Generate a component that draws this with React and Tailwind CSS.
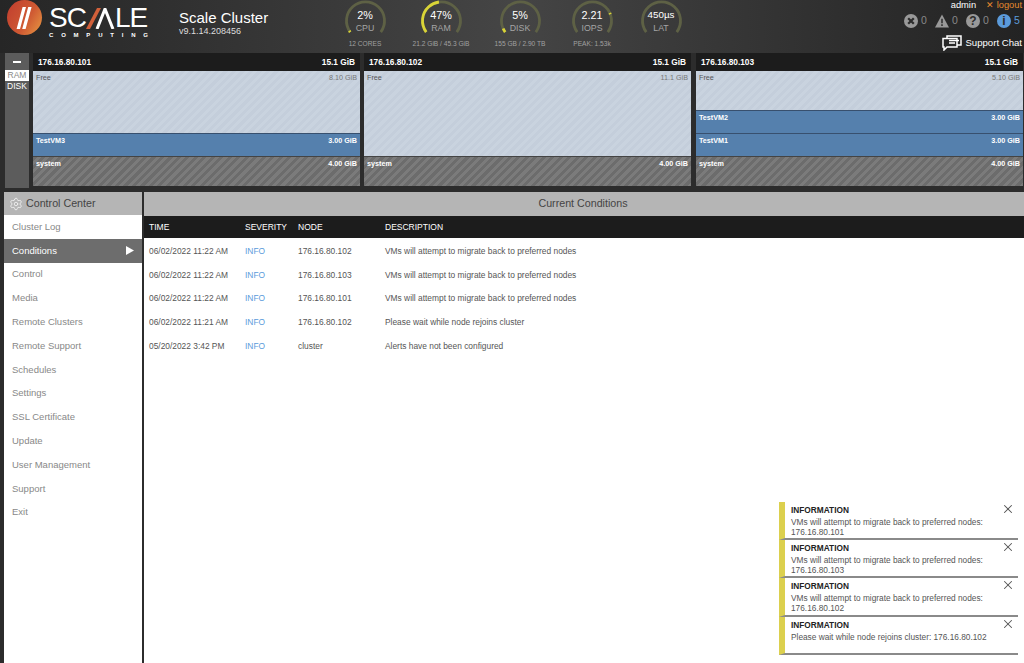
import React from "react";
import { X, Settings } from "lucide-react";

const GAUGES = [
  { value: "2%", label: "CPU", sub: "12 CORES", width: "w-[76px]", dash: "2 100" },
  { value: "47%", label: "RAM", sub: "21.2 GiB / 45.3 GiB", width: "w-[76px]", dash: "47 100" },
  { value: "5%", label: "DISK", sub: "155 GB / 2.90 TB", width: "w-[82px]", dash: "5 100" },
  { value: "2.21", label: "IOPS", sub: "PEAK: 1.53k", width: "w-[62px]", dash: "0 76 1.5 100" },
  { value: "450µs", label: "LAT", sub: "", width: "w-[76px]", dash: "0 100", tight: true },
];

const NODES = [
  {
    ip: "176.16.80.101",
    offset: "",
    rows: [
      { name: "Free", size: "8.10 GiB", kind: "free", h: "h-[62px]" },
      { name: "TestVM3", size: "3.00 GiB", kind: "vm", h: "h-[23px]" },
      { name: "system", size: "4.00 GiB", kind: "sys", h: "h-[30px]" },
    ],
  },
  {
    ip: "176.16.80.102",
    offset: "",
    rows: [
      { name: "Free", size: "11.1 GiB", kind: "free", h: "h-[85px]" },
      { name: "system", size: "4.00 GiB", kind: "sys", h: "h-[30px]" },
    ],
  },
  {
    ip: "176.16.80.103",
    offset: "ml-[1px]",
    rows: [
      { name: "Free", size: "5.10 GiB", kind: "free", h: "h-[39px]" },
      { name: "TestVM2", size: "3.00 GiB", kind: "vm", h: "h-[23px]" },
      { name: "TestVM1", size: "3.00 GiB", kind: "vm", h: "h-[23px]" },
      { name: "system", size: "4.00 GiB", kind: "sys", h: "h-[30px]" },
    ],
  },
];

const ROW_STYLE = {
  free: "bg-[repeating-linear-gradient(135deg,#c9d3df_0px,#c9d3df_3px,#c4cedb_3px,#c4cedb_6px)] text-[#555]",
  vm: "bg-[#5580ad] border-t border-[#38506e] text-white font-bold",
  sys: "bg-[repeating-linear-gradient(135deg,#6c6c6c_0px,#6c6c6c_3px,#7b7b7b_3px,#7b7b7b_6px)] border-t border-[#444] text-white font-bold",
};

const MENU = [
  "Cluster Log", "Conditions", "Control", "Media", "Remote Clusters", "Remote Support",
  "Schedules", "Settings", "SSL Certificate", "Update", "User Management", "Support", "Exit",
];

const CONDITIONS = [
  ["06/02/2022 11:22 AM", "176.16.80.102", "VMs will attempt to migrate back to preferred nodes"],
  ["06/02/2022 11:22 AM", "176.16.80.103", "VMs will attempt to migrate back to preferred nodes"],
  ["06/02/2022 11:22 AM", "176.16.80.101", "VMs will attempt to migrate back to preferred nodes"],
  ["06/02/2022 11:21 AM", "176.16.80.102", "Please wait while node rejoins cluster"],
  ["05/20/2022 3:42 PM", "cluster", "Alerts have not been configured"],
];

const TOASTS = [
  ["VMs will attempt to migrate back to preferred nodes:", "176.16.80.101"],
  ["VMs will attempt to migrate back to preferred nodes:", "176.16.80.103"],
  ["VMs will attempt to migrate back to preferred nodes:", "176.16.80.102"],
  ["Please wait while node rejoins cluster: 176.16.80.102"],
];

const ARC = "M 6.2 32.1 A 19 19 0 1 1 36.8 32.1";

function Gauge({ value, label, sub, width, dash, tight }) {
  return (
    <div className={`${width} shrink-0 flex flex-col items-center`}>
      <div className="relative w-[43px] h-[36px]">
        <svg width="43" height="36" viewBox="0 0 43 36" className="block">
          <path d={ARC} fill="none" stroke="#5e6145" strokeWidth="2.8" />
          <path d={ARC} fill="none" stroke="#d9d437" strokeWidth="2.8" pathLength="100" strokeDasharray={dash} />
        </svg>
        <div className={`absolute inset-x-[-6px] top-[8px] text-center leading-[14px] text-white ${tight ? "text-[9.8px]" : "text-[10.8px]"}`}>{value}</div>
        <div className="absolute inset-x-[-6px] top-[22px] text-center text-[8.8px] leading-[12px] text-[#a5a5a5]">{label}</div>
      </div>
      <div className="mt-[3px] text-[6.6px] leading-[10px] whitespace-nowrap text-[#a0a0a0]">{sub}</div>
    </div>
  );
}

function Logo() {
  return (
    <div className="flex shrink-0 w-[179px] pl-[7px]">
      <svg width="36" height="35" viewBox="0 0 36 35" className="shrink-0">
        <defs>
          <linearGradient id="logoFill" x1="0" y1="0.2" x2="1" y2="0.8">
            <stop offset="0" stopColor="#c2402f" />
            <stop offset="0.6" stopColor="#cf5a33" />
            <stop offset="1" stopColor="#e48f40" />
          </linearGradient>
        </defs>
        <circle cx="17.5" cy="17.5" r="17.5" fill="url(#logoFill)" />
        <path d="M15.6 7 L19 7 L13 29 L9.6 29 Z M21.2 7 L24.6 7 L18.6 29 L15.2 29 Z" fill="#fff" />
      </svg>
      <div className="ml-[6px] w-[99px]">
        <div className="flex items-center h-[22px] mt-[7px] text-[28px] leading-[22px] text-white">
          <span className="tracking-[-1px]">SC</span>
          <svg width="29" height="21" viewBox="0 0 29 21" className="shrink-0">
            <path d="M0 21 L11 0 L15 0 L4 21 Z" fill="#d2603a" />
            <path d="M11 21 L19 1 L27 21" fill="none" stroke="#fff" strokeWidth="3" />
          </svg>
          <span className="tracking-[-1px]">LE</span>
        </div>
        <div className="mt-[2px] flex justify-between text-[6px] leading-[8px] font-bold text-white">
          {"COMPUTING".split("").map((c, i) => (
            <span key={i}>{c}</span>
          ))}
        </div>
      </div>
    </div>
  );
}

function StatusIcon({ type }) {
  if (type === "error") {
    return (
      <svg width="14" height="14" viewBox="0 0 15 15">
        <circle cx="7.5" cy="7.5" r="7.5" fill="#999" />
        <path d="M4.5 4.5 L10.5 10.5 M10.5 4.5 L4.5 10.5" stroke="#2c2c2c" strokeWidth="2.4" />
      </svg>
    );
  }
  if (type === "warn") {
    return (
      <svg width="14" height="14" viewBox="0 0 15 14">
        <path d="M7.5 0 L15 14 L0 14 Z" fill="#999" />
        <path d="M7.5 4.5 V9.5 M7.5 10.6 V12.4" stroke="#2c2c2c" strokeWidth="1.6" />
      </svg>
    );
  }
  const info = type === "info";
  return (
    <div className={`w-[14px] h-[14px] rounded-full flex items-center justify-center text-[#2c2c2c] font-bold text-[12px] leading-none ${info ? "bg-[#5b9bdb]" : "bg-[#999]"}`}>
      {info ? "i" : "?"}
    </div>
  );
}

function HeaderRight() {
  const stats = [
    { type: "error", n: "0", w: "w-[31px]" },
    { type: "warn", n: "0", w: "w-[31px]" },
    { type: "help", n: "0", w: "w-[31px]" },
    { type: "info", n: "5", w: "w-[24px]" },
  ];
  return (
    <div className="ml-auto w-[125px] shrink-0 flex flex-col items-end pr-[2px] text-[9.3px]">
      <div className="flex gap-[10px] leading-[10px] text-white">
        <span>admin</span>
        <span className="text-[#e58a2e]">✕ logout</span>
      </div>
      <div className="flex items-center mt-[3px] mr-[1px]">
        {stats.map((s) => (
          <div key={s.type} className={`${s.w} flex items-center gap-[3px]`}>
            <StatusIcon type={s.type} />
            <span className={`text-[10.5px] ${s.type === "info" ? "text-[#5b9bdb]" : "text-[#888]"}`}>{s.n}</span>
          </div>
        ))}
      </div>
      <div className="flex items-center mt-[6px] text-white text-[9.6px] leading-[14px]">
        <svg width="20" height="16" viewBox="0 0 20 16" fill="none" stroke="#fff" strokeWidth="1.5" className="mr-[3px]">
          <path d="M5 3 V1 H19 V10 H15" />
          <path d="M1 3.5 H15 V12 H5 L2 15 V12 H1 Z" />
          <path d="M7 5.5 H17 M7 8 H13" />
        </svg>
        Support Chat
      </div>
    </div>
  );
}

function NodeCard({ node }) {
  return (
    <div className={`w-[327px] shrink-0 flex flex-col ${node.offset}`}>
      <div className="h-[18px] bg-[#1c1c1c] flex items-center justify-between px-[5px] pt-[1px] text-[8.3px] font-bold text-white">
        <span>{node.ip}</span>
        <span>15.1 GiB</span>
      </div>
      {node.rows.map((r) => (
        <div key={r.name} className={`${r.h} ${ROW_STYLE[r.kind]} flex justify-between items-start px-[3px] pt-[2px] text-[7.2px] leading-[10px]`}>
          <span>{r.name}</span>
          <span className={r.kind === "free" ? "text-[#777]" : ""}>{r.size}</span>
        </div>
      ))}
    </div>
  );
}

export default function App() {
  return (
    <div className="relative w-[1024px] h-[663px] overflow-hidden flex flex-col bg-[#2c2c2c] font-['Liberation_Sans',Arial,sans-serif]">
      {/* header */}
      <div className="h-[53px] shrink-0 flex items-start overflow-hidden bg-linear-to-r from-[#262626] via-[#454545] to-[#232323]">
        <Logo />
        <div className="w-[148px] shrink-0 pt-[10px] text-white">
          <div className="text-[15px] leading-[16px]">Scale Cluster</div>
          <div className="text-[9px] leading-[11px] text-[#ddd]">v9.1.14.208456</div>
        </div>
        <div className="flex">
          {GAUGES.map((g) => (
            <Gauge key={g.label} {...g} />
          ))}
        </div>
        <HeaderRight />
      </div>

      {/* node usage strip */}
      <div className="h-[135px] shrink-0 flex pl-[5px]">
        <div className="w-[24px] shrink-0 bg-[#5c5c5c] flex flex-col items-center text-[8.5px] leading-[11px]">
          <div className="h-[17px] w-full flex items-center justify-center">
            <div className="w-[8px] h-[2px] bg-white" />
          </div>
          <div className="w-full text-center bg-white text-[#888]">RAM</div>
          <div className="w-full text-center text-white">DISK</div>
        </div>
        <div className="flex gap-[4px] ml-[4px]">
          {NODES.map((n) => (
            <NodeCard key={n.ip} node={n} />
          ))}
        </div>
      </div>

      {/* control center */}
      <div className="flex-1 flex pl-[4px] pt-[4px] min-h-0">
        <div className="w-[138px] shrink-0 bg-white text-[9.5px] text-[#888]">
          <div className="h-[23px] bg-[#b5b5b5] flex items-center pl-[5px] gap-[3px] text-[10.7px] text-[#444]">
            <Settings size={14} strokeWidth={1.5} className="text-[#f0f0f0]" />
            Control Center
          </div>
          {MENU.map((m) => (
            <div
              key={m}
              className={`h-[23.8px] flex items-center justify-between px-[8px] ${m === "Conditions" ? "bg-[#6d6d6d] text-white" : ""}`}
            >
              {m}
              {m === "Conditions" && (
                <svg width="8" height="9" viewBox="0 0 8 9">
                  <path d="M0 0 L8 4.5 L0 9 Z" fill="#fff" />
                </svg>
              )}
            </div>
          ))}
        </div>
        <div className="flex-1 ml-[2px] bg-white">
          <div className="h-[24px] bg-[#b5b5b5] flex items-center justify-center pr-[2px] pb-[1px] text-[10.7px] text-[#444]">Current Conditions</div>
          <div className="h-[22px] bg-[#1c1c1c] flex items-center text-[8.5px] text-white">
            <div className="w-[101px] pl-[5px]">TIME</div>
            <div className="w-[53px]">SEVERITY</div>
            <div className="w-[87px]">NODE</div>
            <div>DESCRIPTION</div>
          </div>
          <div className="mt-[1px]">
            {CONDITIONS.map((c, i) => (
              <div key={i} className="h-[23.9px] flex items-center text-[8.4px] text-[#555]">
                <div className="w-[101px] pl-[5px]">{c[0]}</div>
                <div className="w-[53px] text-[#5b9bdb]">INFO</div>
                <div className="w-[87px]">{c[1]}</div>
                <div>{c[2]}</div>
              </div>
            ))}
          </div>
        </div>
      </div>

      {/* toasts */}
      <div className="absolute left-[779px] top-[502px] w-[239px] flex flex-col">
        {TOASTS.map((lines, i) => (
          <div key={i} className="relative h-[38.2px] border-l-[6px] border-l-[#dcd04e] border-b-2 border-b-[#8a8a8a] bg-white pl-[6px] pt-[3px] text-[8.3px] leading-[10px] text-[#555]">
            <div className="font-bold text-[#222] mb-[2px]">INFORMATION</div>
            {lines.map((l) => (
              <div key={l}>{l}</div>
            ))}
            <X size={14} strokeWidth={1.8} className="absolute right-[3px] top-0 text-[#555]" />
          </div>
        ))}
      </div>
    </div>
  );
}
